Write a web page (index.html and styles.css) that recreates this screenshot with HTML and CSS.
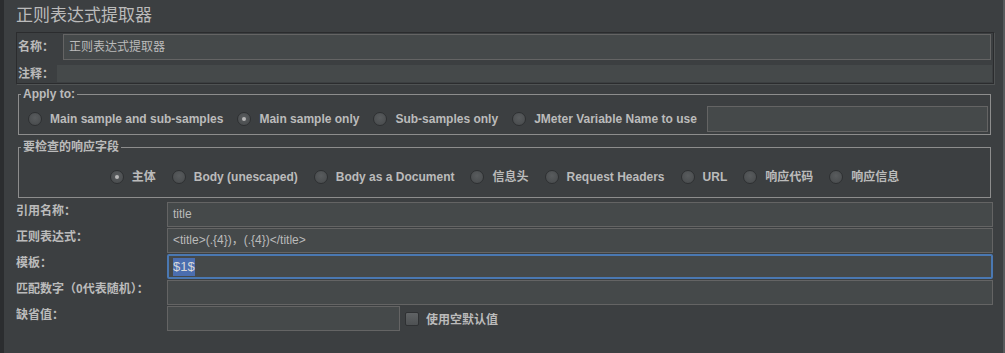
FILE: index.html
```
<!DOCTYPE html>
<html lang="zh">
<head>
    <meta charset="UTF-8">
    <title>正则表达式提取器</title>
    <link rel="stylesheet" href="styles.css">
</head>
<body>
    <div class="window">
        <h1 class="title">正则表达式提取器</h1>

        <div class="name-panel">
            <div class="name-row">
                <span class="label name-label">名称：</span>
                <div class="field">正则表达式提取器</div>
            </div>
            <div class="comment-row">
                <span class="label comment-label">注释：</span>
                <div class="comment"></div>
            </div>
        </div>

        <fieldset class="group apply">
            <legend>Apply to:</legend>
            <div class="radios">
                <span class="radio"><span class="dot"></span>Main sample and sub-samples</span>
                <span class="radio"><span class="dot checked"></span>Main sample only</span>
                <span class="radio"><span class="dot"></span>Sub-samples only</span>
                <span class="radio"><span class="dot"></span>JMeter Variable Name to use</span>
                <div class="field var-name"></div>
            </div>
        </fieldset>

        <fieldset class="group fields">
            <legend>要检查的响应字段</legend>
            <div class="radios centered">
                <span class="radio"><span class="dot checked"></span>主体</span>
                <span class="radio"><span class="dot"></span>Body (unescaped)</span>
                <span class="radio"><span class="dot"></span>Body as a Document</span>
                <span class="radio"><span class="dot"></span>信息头</span>
                <span class="radio"><span class="dot"></span>Request Headers</span>
                <span class="radio"><span class="dot"></span>URL</span>
                <span class="radio"><span class="dot"></span>响应代码</span>
                <span class="radio"><span class="dot"></span>响应信息</span>
            </div>
        </fieldset>

        <div class="form">
            <span class="label">引用名称：</span>
            <div class="field">title</div>

            <span class="label">正则表达式：</span>
            <div class="field">&lt;title&gt;(.{4})，(.{4})&lt;/title&gt;</div>

            <span class="label">模板：</span>
            <div class="field focused"><span class="selected">$1$</span></div>

            <span class="label">匹配数字（0代表随机）：</span>
            <div class="field"></div>

            <span class="label">缺省值：</span>
            <div class="default-row">
                <div class="field short"></div>
                <span class="checkbox"></span>
                <span class="check-label">使用空默认值</span>
            </div>
        </div>
    </div>
</body>
</html>
```

FILE: styles.css
```
body {
    margin: 0;
    background: #3c3f41;
    color: #bbbbbb;
    font-family: "Liberation Sans", "Noto Sans CJK SC", sans-serif;
    font-size: 12px;
}
.window {
    height: 353px;
    box-sizing: border-box;
    border-left: 4px solid #2b2d2f;
    border-right: 2px solid #56595b;
    padding: 0 9px 0 12px;
    overflow: hidden;
}
.title {
    margin: 0 0 6px 0;
    padding-top: 6px;
    font-size: 17px;
    font-weight: normal;
    line-height: 20px;
}
.label {
    font-weight: bold;
    line-height: 14px;
    white-space: nowrap;
}

/* name / comment */
.name-panel {
    height: 52px;
    box-sizing: border-box;
    border: 1px solid #2b2c2e;
    box-shadow: 1px 1px 0 #505354;
    padding: 1px 1px 0 1px;
}
.name-row {
    display: flex;
    align-items: center;
    margin-right: 1px;
}
.name-label {
    width: 45px;
}
.name-row .field {
    flex: 1;
    height: 26px;
    line-height: 24px;
}
.comment-row {
    display: flex;
    align-items: center;
    margin-top: 5px;
}
.comment-label {
    width: 39px;
}
.comment {
    flex: 1;
    height: 17px;
    background: #45494a;
}

.field {
    box-sizing: border-box;
    height: 25px;
    line-height: 23px;
    background: #45494a;
    border: 1px solid #646464;
    padding-left: 5px;
    white-space: nowrap;
    overflow: hidden;
}
.field.focused {
    border: 2px solid #4a78b2;
    border-radius: 2px;
    padding-left: 4px;
    line-height: 21px;
}
.selected {
    display: inline-block;
    background: #4b6eaf;
    color: #d8d8d8;
    line-height: 18px;
    vertical-align: middle;
    font-size: 13px;
}

/* radio groups */
.group {
    border: 1px solid #8d8d8d;
    padding: 0;
    margin: 3px 3px 0 2px;
    min-width: 0;
}
.group legend {
    font-weight: bold;
    line-height: 14px;
    padding: 0 2px;
    margin-left: 2px;
}
.radios {
    display: flex;
    align-items: center;
    gap: 14px;
}
.radio {
    display: flex;
    align-items: center;
    gap: 8px;
    font-weight: bold;
    line-height: 14px;
    white-space: nowrap;
}
.apply .radios {
    padding: 5px 2px 2px 9px;
}
.fields {
    margin-top: 5px;
}
.radios.centered {
    justify-content: center;
    gap: 16px;
    padding: 16px 0 13px 0;
}
.dot {
    width: 14px;
    height: 14px;
    box-sizing: border-box;
    border-radius: 50%;
    border: 1px solid #2e3032;
    background: radial-gradient(circle at 50% 40%, #595c5e, #46494b);
    display: flex;
    align-items: center;
    justify-content: center;
}
.dot.checked::after {
    content: "";
    width: 4px;
    height: 4px;
    border-radius: 50%;
    background: #b8b8b8;
}
.var-name {
    flex: 1;
    height: 26px;
    margin-left: -4px;
}

/* form rows */
.form {
    display: grid;
    grid-template-columns: 151px 1fr;
    row-gap: 1px;
    margin: 4px 1px 0 0;
}
.form .label {
    align-self: start;
    padding-top: 2px;
}
.default-row {
    display: flex;
    align-items: center;
}
.field.short {
    width: 233px;
}
.checkbox {
    width: 14px;
    height: 14px;
    box-sizing: border-box;
    margin-left: 5px;
    border: 1px solid #2f3133;
    border-radius: 2px;
    background: linear-gradient(#606365, #4e5153);
}
.check-label {
    margin-left: 7px;
    font-weight: bold;
}
```
